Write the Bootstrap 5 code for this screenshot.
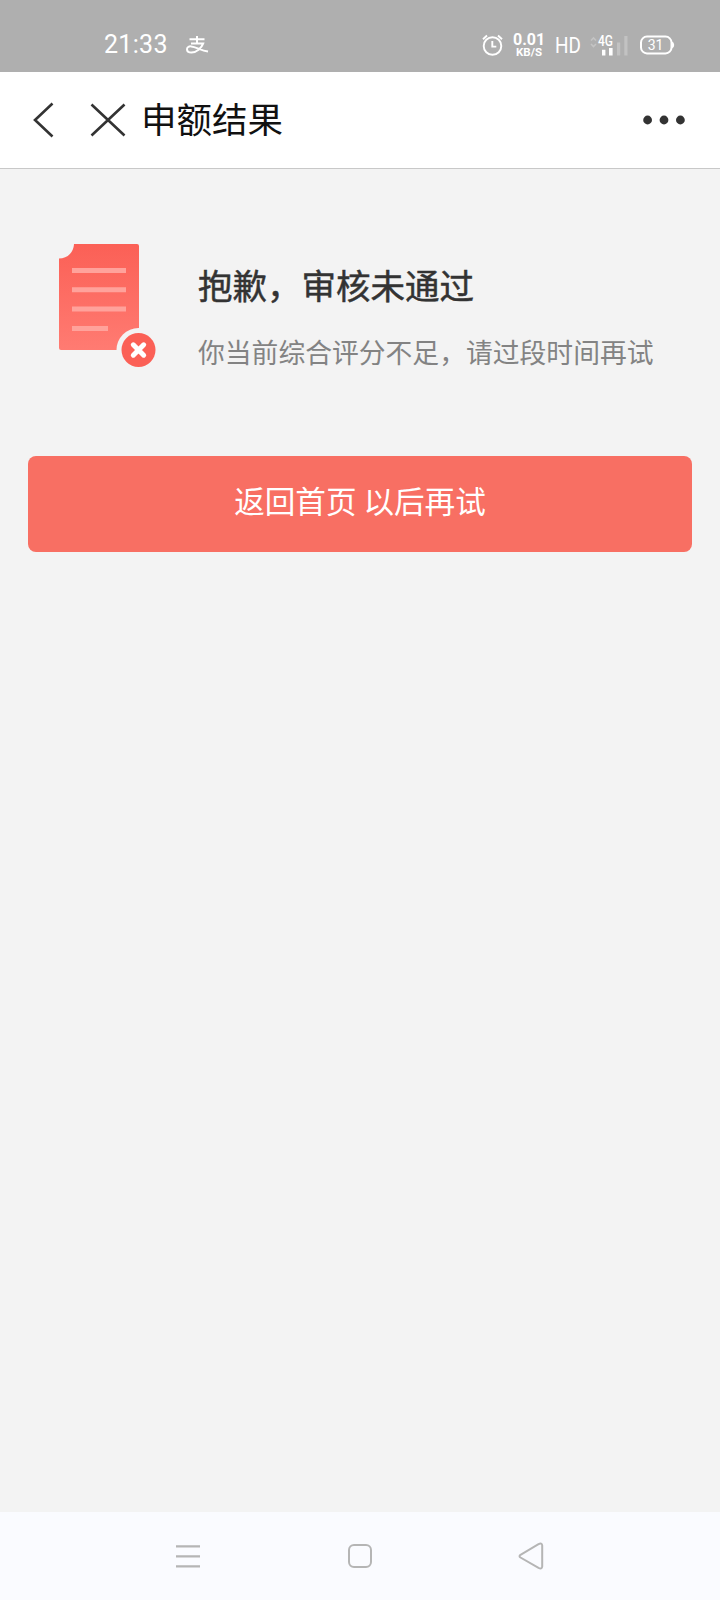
<!DOCTYPE html>
<html lang="zh-CN">
<head>
<meta charset="utf-8">
<meta name="viewport" content="width=device-width, initial-scale=1">
<title>申额结果</title>
<link href="https://cdn.jsdelivr.net/npm/bootstrap@5.3.0/dist/css/bootstrap.min.css" rel="stylesheet">
<style>
body{background:#f3f3f3;font-family:"Noto Sans CJK SC",sans-serif;min-height:1600px;white-space:nowrap}
svg{display:block;flex:none}
.status-bar{height:72px;background:#afafaf;padding:18px 45px 0 104px;font-family:Roboto,sans-serif}
.status-bar>div{height:54px}
.clock{font:400 25px/54px Roboto,sans-serif;width:82px;letter-spacing:.3px}
.speed{font-weight:700;width:32px;text-align:center;margin-left:9px}
.speed-num{font-size:16px;line-height:14px}
.speed-unit{font-size:11.5px;line-height:11px}
.hd{font-size:22px;line-height:54px;width:27px;margin-left:10px;transform:scaleX(.86);transform-origin:left;padding-top:1px}
.title-bar{height:97px;background:#fff;border-bottom:1px solid #c8c8c8;padding:0 34px 0 32px}
.page-title{font-size:35.5px;line-height:92px;height:96px;color:#111;margin:0 0 0 15px;font-weight:400}
.result{padding:74px 28px 0 58px;height:287px}
.result-text{margin-left:39px}
.result-title{font-size:34.5px;line-height:50px;margin:16px 0 0;font-weight:400;color:#333;-webkit-text-stroke:.5px #333}
.result-desc{font-size:26.8px;line-height:40px;margin:23px 0 0;color:#838383}
.btn-home,.btn-home:hover{height:96px;border-radius:8px;background:#f86f63;color:#fff;border:0;font-size:30.6px;line-height:88px;padding:0 0 8px}
.system-nav{height:88px;background:#fafbff;padding:0 175px 0 174px}
</style>
</head>
<body class="d-flex flex-column">
<header>
  <div class="status-bar d-flex justify-content-between text-white">
    <div class="d-flex align-items-center">
      <span class="clock">21:33</span>
      <svg width="23" height="20" viewBox="0 0 23 20" fill="none" stroke="#fff" stroke-width="2"><path d="M3.5 4.2H18.5M11 1V8.2M5 8.4H17.2C15.5 13.2 10.5 17.6 5.5 17.6C2.4 17.6 1 16 1 14.2C1 12.2 2.8 11.2 5.2 11.4C9.8 11.8 14.6 15.2 22 16.6"/></svg>
    </div>
    <div class="d-flex align-items-center">
      <svg width="22" height="22" viewBox="0 0 22 22" fill="none" stroke="#fff" stroke-width="1.9"><circle cx="10.5" cy="12" r="8.8"/><path d="M1 5.2L5 1.5M16 1.5L20 5.2M10.3 7V12.6H14.3"/></svg>
      <div class="speed"><div class="speed-num">0.01</div><div class="speed-unit">KB/S</div></div>
      <span class="hd">HD</span>
      <svg width="40" height="24" viewBox="0 0 40 24" style="margin-left:6px"><path d="M3 7.5L5.5 5L8 7.5M3 11L5.5 13.5L8 11" fill="none" stroke="#c4c4c4" stroke-width="1.6"/><text x="10" y="13" font-family="Roboto" font-size="14" font-weight="500" fill="#fff" textLength="15" lengthAdjust="spacingAndGlyphs">4G</text><path d="M14 16.7H17.4V22.5H14ZM21 15H24.6V22.5H21Z" fill="#fff"/><path d="M29 9.5H32.2V22.5H29ZM36.3 3H39.5V22.5H36.3Z" fill="#c2c2c2"/></svg>
      <svg width="35" height="20" viewBox="0 0 35 20" style="margin-left:12px"><rect x="1" y="1.6" width="30.5" height="16.8" rx="6" fill="none" stroke="#fff" stroke-width="2"/><path d="M32 6.5Q34.2 7 34.2 10T32 13.5Z" fill="#fff"/><text x="15.5" y="14.8" text-anchor="middle" font-family="Roboto" font-size="14" fill="#fff">31</text></svg>
    </div>
  </div>
  <nav class="title-bar d-flex align-items-center">
    <svg width="22" height="36" viewBox="0 0 22 36" fill="none" stroke="#333" stroke-width="2.6"><path d="M20.5 1.5L3 18L20.5 34.5"/></svg>
    <svg width="36" height="34" viewBox="0 0 36 34" fill="none" stroke="#333" stroke-width="2.6" style="margin-left:36px"><path d="M1.5 1.5L34.5 32.5M34.5 1.5L1.5 32.5"/></svg>
    <h1 class="page-title">申额结果</h1>
    <svg width="44" height="12" viewBox="0 0 44 12" fill="#333" class="ms-auto"><circle cx="5.6" cy="6" r="4.4"/><circle cx="22" cy="6" r="4.4"/><circle cx="38.4" cy="6" r="4.4"/></svg>
  </nav>
</header>
<main class="flex-grow-1">
  <section class="result d-flex">
    <svg width="101" height="126" viewBox="0 -1 101 126">
      <defs><linearGradient id="sheet" x1="0" y1="0" x2="0" y2="1"><stop offset="0" stop-color="#fb6056"/><stop offset="1" stop-color="#ff7b72"/></linearGradient></defs>
      <path d="M16 0H79Q81 0 81 2V105H61V106H3Q1 106 1 104V14.5C9.5 14.5 15.5 8.5 16 0Z" fill="url(#sheet)"/>
      <path d="M14 24H68V29H14ZM14 43.3H68V48.3H14ZM14 62.6H68V67.6H14ZM14 82H50V87H14Z" fill="#ffa29b"/>
      <circle cx="80.5" cy="106" r="22" fill="#f3f3f3"/><circle cx="80.5" cy="106" r="17" fill="#fb6056"/>
      <path d="M75.3 100.8L85.7 111.2M85.7 100.8L75.3 111.2" stroke="#fff" stroke-width="5" stroke-linecap="round"/>
    </svg>
    <div class="result-text">
      <h2 class="result-title">抱歉，审核未通过</h2>
      <p class="result-desc">你当前综合评分不足，请过段时间再试</p>
    </div>
  </section>
  <div style="padding:0 28px"><button type="button" class="btn btn-home w-100">返回首页 以后再试</button></div>
</main>
<footer class="system-nav d-flex align-items-center justify-content-between">
  <svg width="28" height="26" viewBox="0 0 28 26" stroke="#b5b5b5" stroke-width="2.2"><path d="M2 3.3H26M2 13.3H26M2 23.3H26"/></svg>
  <svg width="26" height="26" viewBox="0 0 26 26" fill="none" stroke="#b5b5b5" stroke-width="2"><rect x="2" y="2" width="22" height="22" rx="5"/></svg>
  <svg width="28" height="28" viewBox="0 0 28 28" fill="none" stroke="#b5b5b5" stroke-width="2"><path d="M3.5 12.8L21.5 2.2Q25 .5 25.2 3.5V24.5Q25 27.5 21.5 25.8L3.5 15.5Q1.6 14.2 3.5 12.8Z"/></svg>
</footer>
<script src="https://cdn.jsdelivr.net/npm/bootstrap@5.3.0/dist/js/bootstrap.bundle.min.js"></script>
</body>
</html>
